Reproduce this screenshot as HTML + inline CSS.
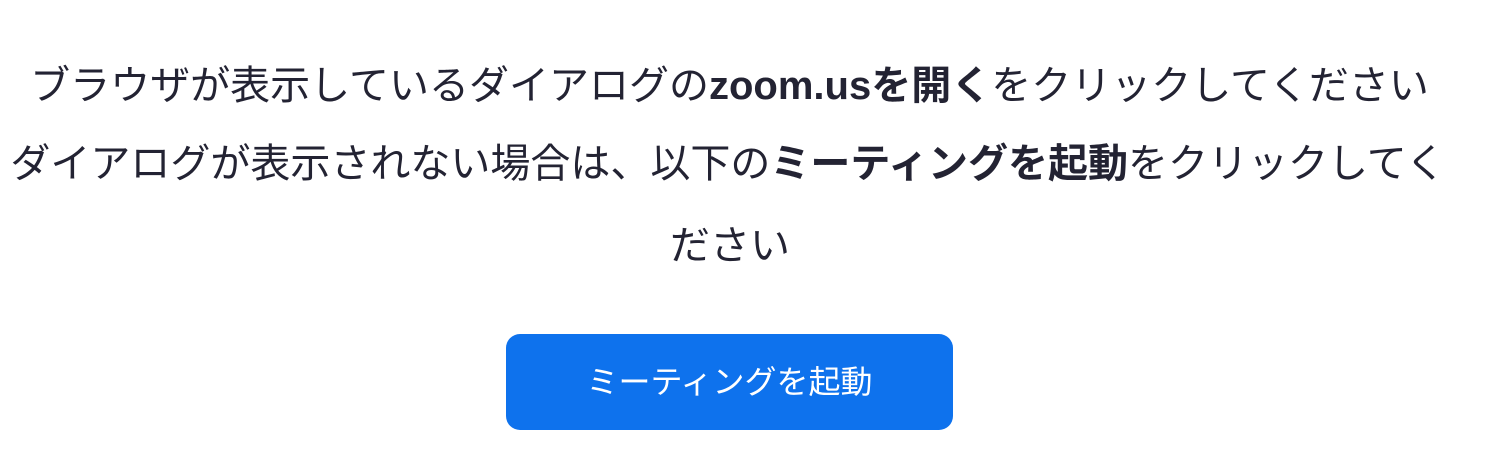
<!DOCTYPE html>
<html><head><meta charset="utf-8"><style>
html,body{margin:0;padding:0;background:#fff;width:1490px;height:452px;overflow:hidden}
body{font-family:"Liberation Sans","Noto Sans CJK JP",sans-serif;color:#232333}
.l{position:absolute;left:0;width:1456px;text-align:center;font-size:40px;line-height:80px;white-space:nowrap}
b{font-weight:700}
.btn{position:absolute;left:506px;top:334px;width:447px;height:96px;background:#0e72ed;border-radius:14px;color:#fff;font-size:32px;line-height:96px;text-align:center}
</style></head><body>
<div class="l" style="top:46px;width:1459px">ブラウザが表示しているダイアログの<b>zoom.usを開く</b>をクリックしてください</div>
<div class="l" style="top:124px">ダイアログが表示されない場合は、以下の<b>ミーティングを起動</b>をクリックしてく</div>
<div class="l" style="top:206px;width:1460px">ださい</div>
<div class="btn">ミーティングを起動</div>
</body></html>
